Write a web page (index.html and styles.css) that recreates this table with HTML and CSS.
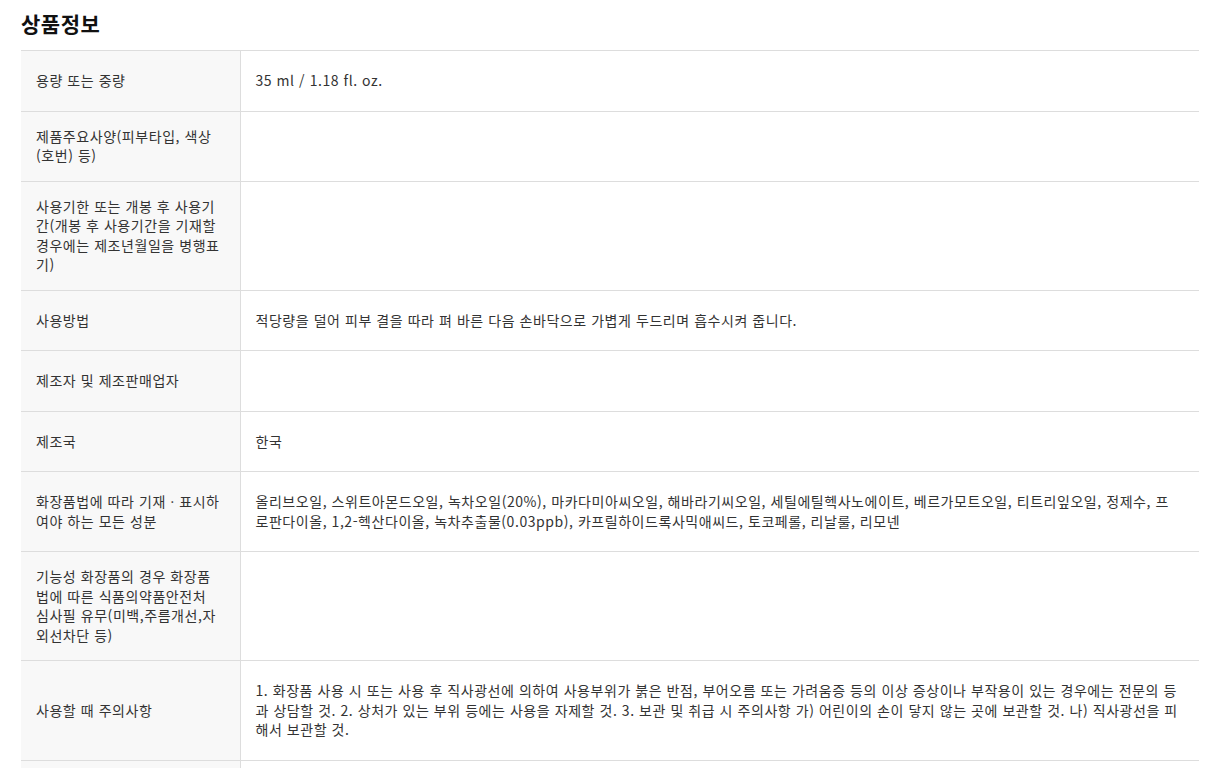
FILE: index.html
```html
<!DOCTYPE html>
<html lang="ko">
<head>
    <meta charset="UTF-8">
    <meta name="viewport" content="width=device-width, initial-scale=1.0">
    <title>상품정보</title>
    <link rel="stylesheet" href="styles.css">
</head>
<body>
    <div class="container">
        <h2 class="section-title">상품정보</h2>
        <table class="info-table">
            <colgroup>
                <col class="col-label">
                <col>
            </colgroup>
            <tbody>
                <tr>
                    <th>용량 또는 중량</th>
                    <td>35 ml / 1.18 fl. oz.</td>
                </tr>
                <tr>
                    <th>제품주요사양(피부타입, 색상(호번) 등)</th>
                    <td></td>
                </tr>
                <tr>
                    <th>사용기한 또는 개봉 후 사용기간(개봉 후 사용기간을 기재할 경우에는 제조년월일을 병행표기)</th>
                    <td></td>
                </tr>
                <tr>
                    <th>사용방법</th>
                    <td>적당량을 덜어 피부 결을 따라 펴 바른 다음 손바닥으로 가볍게 두드리며 흡수시켜 줍니다.</td>
                </tr>
                <tr>
                    <th>제조자 및 제조판매업자</th>
                    <td></td>
                </tr>
                <tr>
                    <th>제조국</th>
                    <td>한국</td>
                </tr>
                <tr>
                    <th>화장품법에 따라 기재ㆍ표시하여야 하는 모든 성분</th>
                    <td>올리브오일, 스위트아몬드오일, 녹차오일(20%), 마카다미아씨오일, 해바라기씨오일, 세틸에틸헥사노에이트, 베르가모트오일, 티트리잎오일, 정제수, 프로판다이올, 1,2-헥산다이올, 녹차추출물(0.03ppb), 카프릴하이드록사믹애씨드, 토코페롤, 리날룰, 리모넨</td>
                </tr>
                <tr>
                    <th>기능성 화장품의 경우 화장품법에 따른 식품의약품안전처 심사필 유무(미백,주름개선,자외선차단 등)</th>
                    <td></td>
                </tr>
                <tr>
                    <th>사용할 때 주의사항</th>
                    <td>1. 화장품 사용 시 또는 사용 후 직사광선에 의하여 사용부위가 붉은 반점, 부어오름 또는 가려움증 등의 이상 증상이나 부작용이 있는 경우에는 전문의 등과 상담할 것. 2. 상처가 있는 부위 등에는 사용을 자제할 것. 3. 보관 및 취급 시 주의사항 가) 어린이의 손이 닿지 않는 곳에 보관할 것. 나) 직사광선을 피해서 보관할 것.</td>
                </tr>
                <tr>
                    <th>품질보증기준</th>
                    <td>본 제품에 이상이 있을 경우 공정거래위원회 고시 소비자분쟁해결기준에 의해 보상받을 수 있습니다.</td>
                </tr>
            </tbody>
        </table>
    </div>
</body>
</html>
```

FILE: styles.css
```css
body {
    font-family: "Noto Sans CJK KR", "Noto Sans", sans-serif;
    margin: 0;
    padding: 0;
    background-color: #fff;
    color: #333;
}
.container {
    padding: 9px 17px 40px 21px;
}
.section-title {
    margin: 0 0 12px;
    font-size: 21px;
    line-height: 29px;
    letter-spacing: 0.5px;
    font-weight: 700;
    color: #111;
}
.info-table {
    width: 1178px;
    border-collapse: collapse;
    table-layout: fixed;
    font-size: 14px;
    line-height: 19.5px;
    letter-spacing: 0.55px;
}
.col-label {
    width: 219px;
}
.info-table th,
.info-table td {
    border-top: 1px solid #ddd;
    border-bottom: 1px solid #ddd;
    text-align: left;
    vertical-align: middle;
    height: 19.5px;
}
.info-table th {
    background-color: #f8f8f8;
    font-weight: 400;
    padding: 15px 17px 15px 15px;
    border-right: 1px solid #ddd;
}
.info-table td {
    padding: 20px 20px 20px 15px;
}
```
